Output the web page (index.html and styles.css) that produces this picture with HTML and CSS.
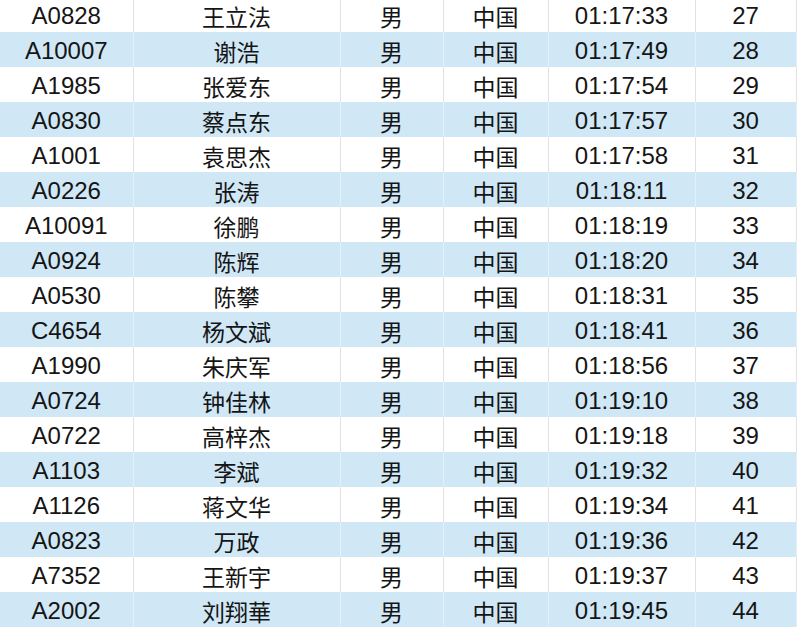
FILE: index.html
```html
<!DOCTYPE html>
<html lang="zh">
<head>
<meta charset="utf-8">
<link rel="stylesheet" href="styles.css">
</head>
<body>
<table class="results">
<colgroup>
<col class="c1"><col class="c2"><col class="c3"><col class="c4"><col class="c5"><col class="c6">
</colgroup>
<tbody>
<tr><td>A0828</td><td class="cjk">王立法</td><td class="cjk">男</td><td class="cjk">中国</td><td>01:17:33</td><td>27</td></tr>
<tr class="alt"><td>A10007</td><td class="cjk">谢浩</td><td class="cjk">男</td><td class="cjk">中国</td><td>01:17:49</td><td>28</td></tr>
<tr><td>A1985</td><td class="cjk">张爱东</td><td class="cjk">男</td><td class="cjk">中国</td><td>01:17:54</td><td>29</td></tr>
<tr class="alt"><td>A0830</td><td class="cjk">蔡点东</td><td class="cjk">男</td><td class="cjk">中国</td><td>01:17:57</td><td>30</td></tr>
<tr><td>A1001</td><td class="cjk">袁思杰</td><td class="cjk">男</td><td class="cjk">中国</td><td>01:17:58</td><td>31</td></tr>
<tr class="alt"><td>A0226</td><td class="cjk">张涛</td><td class="cjk">男</td><td class="cjk">中国</td><td>01:18:11</td><td>32</td></tr>
<tr><td>A10091</td><td class="cjk">徐鹏</td><td class="cjk">男</td><td class="cjk">中国</td><td>01:18:19</td><td>33</td></tr>
<tr class="alt"><td>A0924</td><td class="cjk">陈辉</td><td class="cjk">男</td><td class="cjk">中国</td><td>01:18:20</td><td>34</td></tr>
<tr><td>A0530</td><td class="cjk">陈攀</td><td class="cjk">男</td><td class="cjk">中国</td><td>01:18:31</td><td>35</td></tr>
<tr class="alt"><td>C4654</td><td class="cjk">杨文斌</td><td class="cjk">男</td><td class="cjk">中国</td><td>01:18:41</td><td>36</td></tr>
<tr><td>A1990</td><td class="cjk">朱庆军</td><td class="cjk">男</td><td class="cjk">中国</td><td>01:18:56</td><td>37</td></tr>
<tr class="alt"><td>A0724</td><td class="cjk">钟佳林</td><td class="cjk">男</td><td class="cjk">中国</td><td>01:19:10</td><td>38</td></tr>
<tr><td>A0722</td><td class="cjk">高梓杰</td><td class="cjk">男</td><td class="cjk">中国</td><td>01:19:18</td><td>39</td></tr>
<tr class="alt"><td>A1103</td><td class="cjk">李斌</td><td class="cjk">男</td><td class="cjk">中国</td><td>01:19:32</td><td>40</td></tr>
<tr><td>A1126</td><td class="cjk">蒋文华</td><td class="cjk">男</td><td class="cjk">中国</td><td>01:19:34</td><td>41</td></tr>
<tr class="alt"><td>A0823</td><td class="cjk">万政</td><td class="cjk">男</td><td class="cjk">中国</td><td>01:19:36</td><td>42</td></tr>
<tr><td>A7352</td><td class="cjk">王新宇</td><td class="cjk">男</td><td class="cjk">中国</td><td>01:19:37</td><td>43</td></tr>
<tr class="alt"><td>A2002</td><td class="cjk">刘翔華</td><td class="cjk">男</td><td class="cjk">中国</td><td>01:19:45</td><td>44</td></tr>
</tbody>
</table>
</body>
</html>
```

FILE: styles.css
```css
html, body {
  margin: 0;
  padding: 0;
  background: #ffffff;
  overflow: hidden;
}

.results {
  margin-top: -3px;
  width: 796px;
  table-layout: fixed;
  border-collapse: collapse;
  font-family: "Liberation Sans", Arial, "Noto Sans CJK SC", sans-serif;
  font-size: 24px;
  color: #151515;
}

.c1 { width: 133px; }
.c2 { width: 207px; }
.c3 { width: 103px; }
.c4 { width: 105px; }
.c5 { width: 147px; }
.c6 { width: 101px; }

.results tr {
  height: 35px;
}

.results td {
  padding: 2px 0 0;
  text-align: center;
  vertical-align: middle;
  line-height: 24px;
  border-right: 1px solid #e2e2e2;
  white-space: nowrap;
}

.results .cjk {
  font-family: "Noto Sans CJK SC", sans-serif;
  font-size: 23px;
  font-weight: 400;
}

.results tr.alt td {
  background: #d0e7f6;
  border-right-color: #e4f0f8;
}
```
